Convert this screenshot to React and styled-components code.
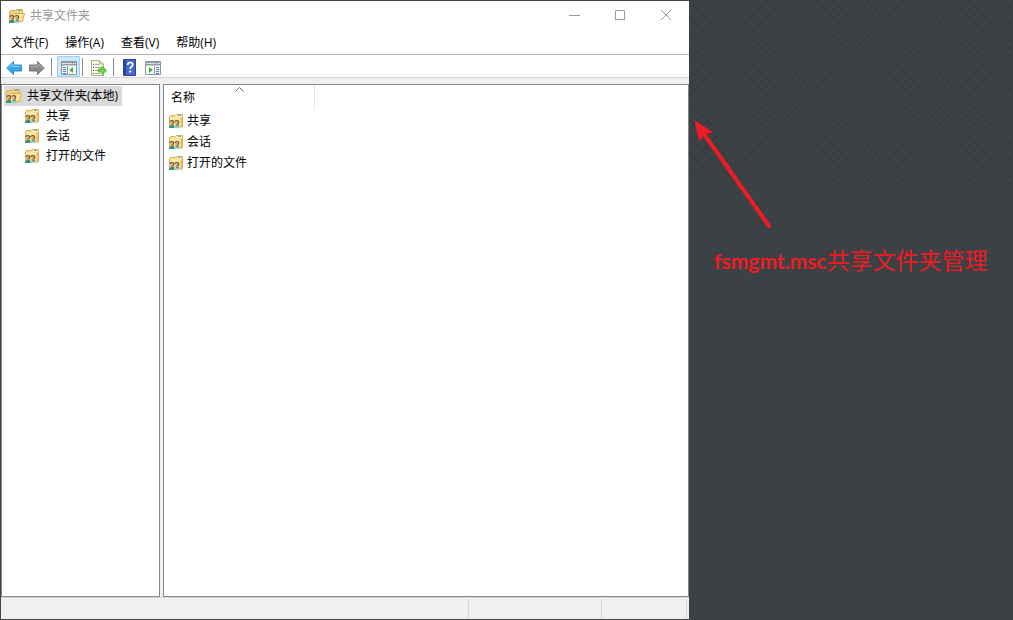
import React from "react";
import styled, { createGlobalStyle } from "styled-components";

const GlobalStyle = createGlobalStyle`
  * { box-sizing: border-box; }
  body {
    margin: 0;
    background: #3c4145;
    color: #000;
    font-family: "Open Sans", "Noto Sans CJK SC", sans-serif;
    font-size: 12px;
    line-height: 20px;
  }
  button { font: inherit; color: inherit; border: 0; background: none; padding: 0; }
  svg { display: block; flex: none; }
`;

const Screen = styled.div`
  display: grid;
  grid-template-columns: minmax(0, 1fr) 324px;
  min-height: 100vh;
`;

const Window = styled.main`
  display: flex;
  flex-direction: column;
  background: #fff;
  border: 1px solid #434447;
  border-right: 0;
`;

const TitleBar = styled.header`
  display: flex;
  align-items: center;
  height: 30px;
  padding-left: 8px;
  gap: 5px;
`;

const Title = styled.h1`
  flex: 1;
  margin: 0;
  font-size: 12px;
  font-weight: 400;
  color: #999;
`;

const WindowControls = styled.div`
  display: flex;
`;

const WindowButton = styled.button`
  display: flex;
  align-items: center;
  justify-content: center;
  width: 46px;
  height: 28px;
  color: #999;
`;

const MenuBar = styled.nav`
  display: flex;
  height: 24px;
  align-items: center;
  gap: 1px;
  padding: 1px 0 0 2px;
  border-bottom: 1px solid #b4b4b4;
`;

const MenuItem = styled.button`
  padding: 0 8px;
  height: 20px;
`;

const ToolBar = styled.div`
  display: flex;
  align-items: center;
  height: 23px;
  padding: 1px 0 0 1px;
  border-bottom: 1px solid #d7d7d7;
`;

const ToolButton = styled.button`
  display: flex;
  align-items: center;
  justify-content: center;
  width: 23px;
  height: 21px;
  padding-top: 2px;
  background: ${(p) => (p.$active ? "#cce8ff" : "transparent")};
  outline: ${(p) => (p.$active ? "1px solid #99d1ff" : "none")};
  outline-offset: -1px;
`;

const ToolSeparator = styled.span`
  width: 1px;
  height: 18px;
  margin: 0 ${(p) => p.$after}px 0 ${(p) => p.$before}px;
  background: #8d8d8d;
`;

const Panes = styled.div`
  flex: 1;
  display: grid;
  grid-template-columns: 159px minmax(0, 1fr);
  gap: 3px;
  padding-top: 6px;
  background: #f0f0f0;
`;

const Pane = styled.section`
  border: 1px solid #828790;
  background: #fff;
`;

const Tree = styled.ul`
  list-style: none;
  margin: 0;
  padding: ${(p) => (p.$nested ? "0 0 0 21px" : "1px 0 0 2px")};
`;

const TreeNode = styled.button`
  display: inline-flex;
  align-items: center;
  height: 20px;
  padding: 0 4px 0 ${(p) => (p.$selected ? 2 : 0)}px;
  gap: ${(p) => (p.$selected ? 5 : 7)}px;
  vertical-align: top;
  background: ${(p) => (p.$selected ? "#d9d9d9" : "transparent")};
`;

const FileTable = styled.table`
  border-collapse: separate;
  border-spacing: 0;
  line-height: 21px;
`;

const ColumnHead = styled.th`
  width: 151px;
  height: 25px;
  padding: 0;
  font-weight: 400;
  text-align: left;
  border-right: 1px solid #e5e5e5;
`;

const SortButton = styled.button`
  position: relative;
  display: block;
  width: 100%;
  padding-left: 7px;
  text-align: left;
`;

const SortMark = styled.svg`
  position: absolute;
  top: 0;
  right: 0;
  left: 0;
  margin: 0 auto;
`;

const FileCell = styled.td`
  height: 21px;
  padding: 0 0 0 5px;
`;

const FileName = styled.span`
  display: flex;
  align-items: center;
  gap: 4px;
`;

const StatusBar = styled.footer`
  display: flex;
  height: 22px;
  padding: 1px 2px 1px 0;
  background: #f0f0f0;
  border-top: 1px solid #d7d7d7;
`;

const StatusCell = styled.span`
  width: ${(p) => p.$width || "auto"};
  flex: ${(p) => (p.$width ? "none" : 1)};
  border-right: 1px solid #d7d7d7;
`;

const Desktop = styled.aside`
  padding-top: 120px;
  background:
    repeating-linear-gradient(45deg, rgba(20, 26, 30, 0.09) 0 1px, transparent 1px 6px) 0 0 / 100% 188px no-repeat,
    repeating-linear-gradient(-45deg, rgba(20, 26, 30, 0.09) 0 1px, transparent 1px 6px) 0 0 / 100% 188px no-repeat,
    #3c4145;
`;

const Arrow = styled.svg`
  margin-left: 5px;
`;

const Caption = styled.p`
  margin: 16px 0 0 25px;
  color: #ed1c24;
  font-family: Lato, "Noto Sans CJK SC", sans-serif;
  font-size: 21px;
  font-weight: 700;
  line-height: 32px;
  white-space: nowrap;
`;

const CaptionText = styled.span`
  font-size: 23px;
  font-weight: 400;
`;

const People = () => (
  <>
    <path d="M0 15v-1.500q1-1.500 2.500-1.500l3 1v2z" fill="#2f9a70" />
    <path d="M5 15v-1.500l2.500-1.500 2.500 1v2z" fill="#9cc7d2" />
    <path d="M1.500 8h3v4h-3zM6.500 8h3v4h-3z" fill="#d9ae7c" />
    <path d="M1 9q0-1.500 1.900-1.500 2 0 1.700 2l-1 1.500M6 9q0-1.500 1.900-1.500 2 0 1.700 2l-1 1.500" fill="none" stroke="#64523f" strokeWidth="1.100" />
    <path d="M2 12l2 .5 1-.7M7 12l2 .5 1-.7" fill="none" stroke="#4d7168" />
  </>
);

const FolderIcon = () => (
  <svg width="14" height="16" viewBox="0 0 14 16" aria-hidden="true">
    <path d="M.5 3.500l1-1h4.500l1-1h6.500v12.500H.5z" fill="#f6da86" stroke="#d3b161" />
    <path d="M7.500 2h5.500v2H7.500z" fill="#fff3b8" />
    <path d="M9 2.500h3" stroke="#75acc4" />
    <path d="M1 4h10v3H1z" fill="#ffe7a0" />
    <path d="M12.500 5v8.500" stroke="#e3bd63" />
    <People />
  </svg>
);

const OpenFolderIcon = () => (
  <svg width="16" height="16" viewBox="0 0 16 16" aria-hidden="true">
    <path d="M.5 13V3.500l1-1H6l1-1h6.500v12z" fill="#f1d27a" stroke="#cfab58" />
    <path d="M9 2.500h3" stroke="#75acc4" />
    <path d="M4.500 6.500l1-1h10L13.500 13.500H4.500z" fill="#ffe49a" stroke="#d4b05d" />
    <People />
  </svg>
);

const ArrowIcon = ({ forward }) => (
  <svg width="16" height="14" viewBox="0 0 16 14" aria-hidden="true">
    <g transform={forward ? "matrix(-1 0 0 1 16 0)" : undefined}>
      <path
        d="M.7 7L7.500.5v3.500h8v6h-8v3.500z"
        fill={forward ? "#8a8a8a" : "#35a8e8"}
        stroke={forward ? "#777" : "#3489c4"}
      />
      <path d="M2.500 6.700L6.600 3v2.500h7.900" fill="none" stroke={forward ? "#b0b0b0" : "#84d5fa"} />
    </g>
  </svg>
);

const PanelIcon = ({ actions }) => (
  <svg width="16" height="14" viewBox="0 0 16 14" aria-hidden="true">
    <path d="M.5.5h15v13H.5z" fill="#fff" stroke="#8b949d" />
    <path d="M1 1h14v3H1z" fill="#8f9ba6" />
    <path d="M1 2.500h10" stroke="#dce3e8" />
    <path d="M12 2.500h1m1 0h1" stroke="#fff" />
    <path d="M1 4.500h14" stroke="#c9d0d6" />
    {actions ? (
      <>
        <path d="M9.500 5v8" stroke="#8b949d" />
        <path d="M4 6l4 3-4 3z" fill="#43b52c" />
        <path d="M11 6.500h3m-3 2h3m-3 2h3m-3 2h3" stroke="#4d7fc1" />
      </>
    ) : (
      <>
        <path d="M6.500 5v8" stroke="#8b949d" />
        <path d="M12 6L8 9l4 3z" fill="#43b52c" />
        <path d="M2 6.500h3m-3 2h3m-3 2h3m-3 2h3" stroke="#4d7fc1" />
      </>
    )}
  </svg>
);

const ExportIcon = () => (
  <svg width="16" height="16" viewBox="0 0 16 16" aria-hidden="true">
    <path d="M.5.5h8l4 3.500v11.500H.5z" fill="#fffbe1" stroke="#b3ad8c" />
    <path d="M8.500.5V4h4" fill="#e8dfaf" stroke="#b3ad8c" />
    <path d="M2 4.500h1m-1 3h1m-1 3h1m-1 3h1" stroke="#4b4b4b" />
    <path d="M4 4.500h4m-4 3h6m-6 3h3m-3 3h5" stroke="#a3a3b5" />
    <path d="M7.500 9h3.500V6.500L15.500 10.500 11 14.500V12H7.500z" fill="#6cd742" stroke="#4bb52e" />
  </svg>
);

const HelpIcon = () => (
  <svg width="13" height="17" viewBox="0 0 13 17" aria-hidden="true">
    <path d="M.5.500h12v16H.5z" fill="#4468cc" stroke="#2b458f" />
    <path d="M1 1h2v15H1z" fill="#2d489b" />
    <path d="M4.700 6q0-2.500 2.500-2.500t2.500 2.200q0 1.200-1.300 2.100-1.200.9-1.200 2.200" fill="none" stroke="#fff" strokeWidth="1.700" />
    <path d="M6.200 11.500h2v2h-2z" fill="#fff" />
  </svg>
);

const menus = ["文件(F)", "操作(A)", "查看(V)", "帮助(H)"];
const folders = ["共享", "会话", "打开的文件"];

export default function App() {
  return (
    <>
      <GlobalStyle />
      <Screen>
        <Window>
          <TitleBar>
            <OpenFolderIcon />
            <Title>共享文件夹</Title>
            <WindowControls>
              <WindowButton aria-label="最小化">
                <svg width="12" height="12" viewBox="0 0 12 12"><path d="M1 5.500h11" stroke="currentColor" /></svg>
              </WindowButton>
              <WindowButton aria-label="最大化">
                <svg width="12" height="12" viewBox="0 0 12 12"><path d="M1.500.5h9v9h-9z" fill="none" stroke="currentColor" /></svg>
              </WindowButton>
              <WindowButton aria-label="关闭">
                <svg width="12" height="12" viewBox="0 0 12 12"><path d="M1 0l10 10M11 0L1 10" stroke="currentColor" /></svg>
              </WindowButton>
            </WindowControls>
          </TitleBar>

          <MenuBar>
            {menus.map((name) => <MenuItem key={name}>{name}</MenuItem>)}
          </MenuBar>

          <ToolBar>
            <ToolButton aria-label="后退"><ArrowIcon /></ToolButton>
            <ToolButton aria-label="前进"><ArrowIcon forward /></ToolButton>
            <ToolSeparator $before={3} $after={5} />
            <ToolButton $active aria-label="显示控制台树"><PanelIcon /></ToolButton>
            <ToolSeparator $before={2} $after={4} />
            <ToolButton aria-label="导出列表"><ExportIcon /></ToolButton>
            <ToolSeparator $before={3} $after={4} />
            <ToolButton aria-label="帮助"><HelpIcon /></ToolButton>
            <ToolButton aria-label="显示操作窗格"><PanelIcon actions /></ToolButton>
          </ToolBar>

          <Panes>
            <Pane>
              <Tree>
                <li>
                  <TreeNode $selected><OpenFolderIcon />共享文件夹(本地)</TreeNode>
                  <Tree $nested>
                    {folders.map((name) => (
                      <li key={name}><TreeNode><FolderIcon />{name}</TreeNode></li>
                    ))}
                  </Tree>
                </li>
              </Tree>
            </Pane>
            <Pane>
              <FileTable>
                <thead>
                  <tr>
                    <ColumnHead scope="col">
                      <SortButton>
                        名称
                        <SortMark width="9" height="5" viewBox="0 0 9 5"><path d="M.5 4.500l4-4 4 4" fill="none" stroke="#666" /></SortMark>
                      </SortButton>
                    </ColumnHead>
                  </tr>
                </thead>
                <tbody>
                  {folders.map((name) => (
                    <tr key={name}>
                      <FileCell><FileName><FolderIcon />{name}</FileName></FileCell>
                    </tr>
                  ))}
                </tbody>
              </FileTable>
            </Pane>
          </Panes>

          <StatusBar>
            <StatusCell />
            <StatusCell $width="133px" />
            <StatusCell $width="85px" />
          </StatusBar>
        </Window>

        <Desktop>
          <Arrow width="80" height="108" viewBox="0 0 80 108" aria-hidden="true">
            <path d="M10 14l65 92" stroke="#ed1c24" strokeWidth="4" strokeLinecap="round" />
            <path d="M1 1l17 11-7.500 2-5 6.500z" fill="#ed1c24" stroke="#ed1c24" />
          </Arrow>
          <Caption>fsmgmt.msc<CaptionText>共享文件夹管理</CaptionText></Caption>
        </Desktop>
      </Screen>
    </>
  );
}
